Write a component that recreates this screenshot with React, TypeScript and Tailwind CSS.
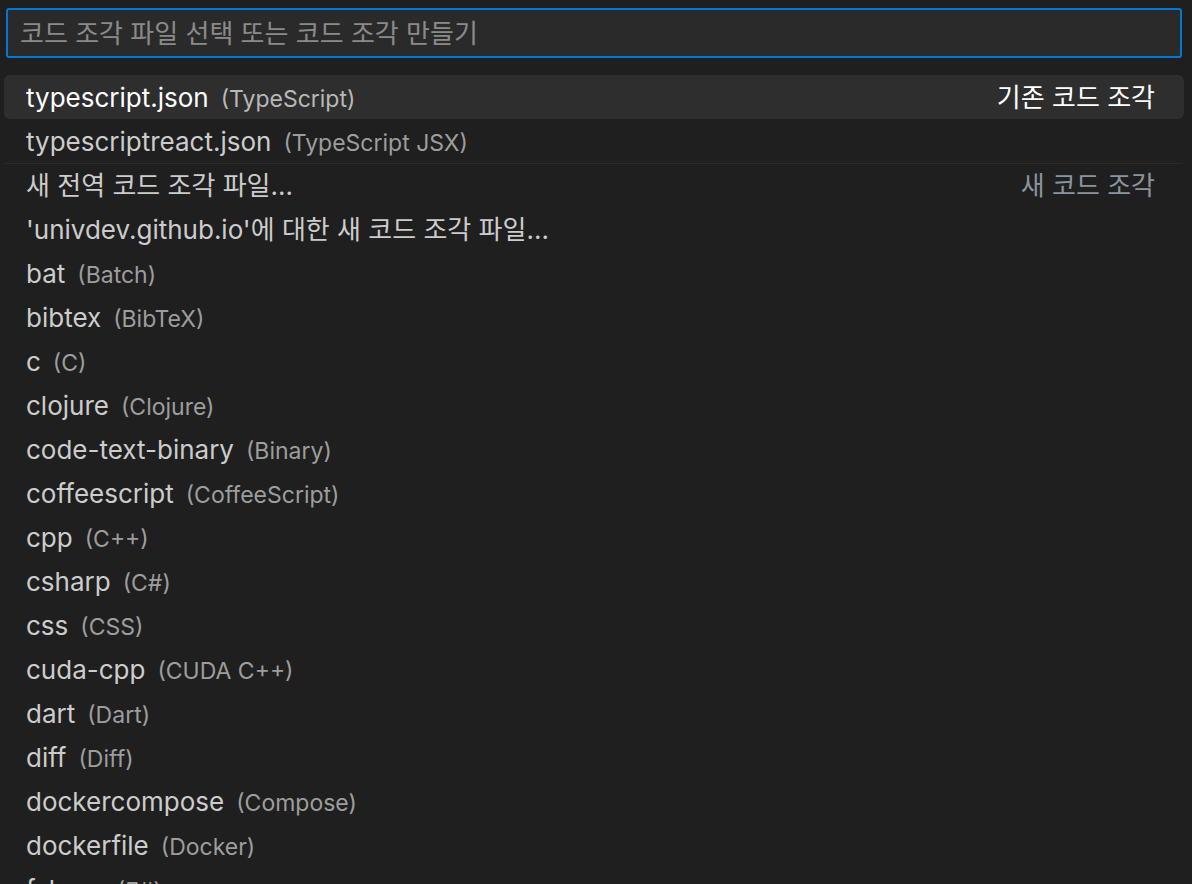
import React from "react";

type Item = { label: string; desc?: string; right?: string; sep?: boolean };

const items: Item[] = [
  { label: "typescript.json", desc: "(TypeScript)", right: "기존 코드 조각" },
  { label: "typescriptreact.json", desc: "(TypeScript JSX)" },
  { label: "새 전역 코드 조각 파일...", right: "새 코드 조각", sep: true },
  { label: "'univdev.github.io'에 대한 새 코드 조각 파일..." },
  { label: "bat", desc: "(Batch)" },
  { label: "bibtex", desc: "(BibTeX)" },
  { label: "c", desc: "(C)" },
  { label: "clojure", desc: "(Clojure)" },
  { label: "code-text-binary", desc: "(Binary)" },
  { label: "coffeescript", desc: "(CoffeeScript)" },
  { label: "cpp", desc: "(C++)" },
  { label: "csharp", desc: "(C#)" },
  { label: "css", desc: "(CSS)" },
  { label: "cuda-cpp", desc: "(CUDA C++)" },
  { label: "dart", desc: "(Dart)" },
  { label: "diff", desc: "(Diff)" },
  { label: "dockercompose", desc: "(Compose)" },
  { label: "dockerfile", desc: "(Docker)" },
  { label: "fsharp", desc: "(F#)" },
];

export default function App() {
  return (
    <div
      className="h-[884px] w-[1192px] overflow-hidden bg-[#1f1f1f] text-[#cccccc]"
      style={{ fontFamily: 'Inter, "Noto Sans", "Noto Sans CJK KR", sans-serif' }}
    >
      <div className="px-[6px] pt-[8px] pr-[10px]">
        <div className="flex h-[50px] items-center rounded-[3px] border-2 border-[#0078d4] bg-[#2a2a2a] px-[12px] text-[26px] text-[#8a8a8a]">
          코드 조각 파일 선택 또는 코드 조각 만들기
        </div>
      </div>
      <div className="mt-[17px] pl-[4px] pr-[8px]">
        {items.map((it, i) => (
          <div key={i} className={it.sep ? "mx-[1px] border-t border-[#2c2c2c]" : ""}>
            <div
              className={`flex items-center rounded-[6px] pl-[22px] pr-[29px] text-[26px] ${
                i === 0 ? "bg-[#2e2e2f] text-white" : "text-[#cccccc]"
              } ${it.sep ? "-mx-[1px] h-[43px]" : "h-[44px]"}`}
            >
              <span className="whitespace-nowrap">
                {it.label}
                {it.desc && (
                  <span className={`ml-[12px] text-[23px] ${i === 0 ? "text-[#b8b8b8]" : "text-[#9d9d9d]"}`}>
                    {it.desc}
                  </span>
                )}
              </span>
              <div className="flex-1" />
              {it.right && (
                <span className={`whitespace-nowrap ${i === 0 ? "text-white" : "text-[#8b949e]"}`}>{it.right}</span>
              )}
            </div>
          </div>
        ))}
      </div>
    </div>
  );
}
